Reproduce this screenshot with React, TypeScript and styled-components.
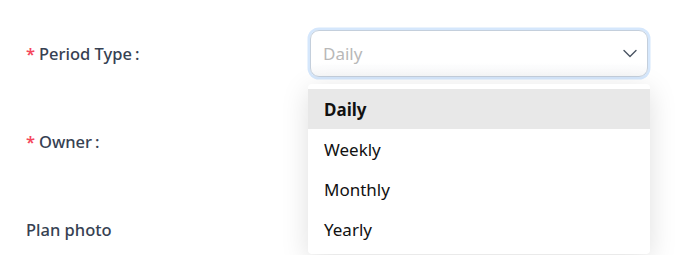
import React from 'react'
import styled, { createGlobalStyle } from 'styled-components'

const GlobalStyle = createGlobalStyle`
  body {
    margin: 0;
    background: #ffffff;
    font-family: "Noto Sans", "Open Sans", sans-serif;
  }
`

const Form = styled.div`
  padding: 28px 0 0 26px;
  display: flex;
  flex-direction: column;
  gap: 37px;
`

const Row = styled.div`
  display: grid;
  grid-template-columns: 282px 342px;
  align-items: center;
  min-height: 51px;
`

const Label = styled.div`
  display: flex;
  align-items: center;
  font-size: 16.5px;
  font-weight: 500;
  color: #364152;
`

const Required = styled.span`
  color: #f5475c;
  font-weight: 600;
  margin-right: 4px;
`

const Colon = styled.span`
  margin-left: 3px;
`

const Field = styled.div`
  position: relative;
  height: 51px;
`

const SelectBox = styled.div`
  box-sizing: border-box;
  margin: 2px 2px 2px 2px;
  height: 47px;
  border: 1px solid #c4cfdc;
  border-radius: 9px;
  box-shadow: 0 0 0 2.5px #d5e7fc;
  background: linear-gradient(#ffffff 70%, #f7f8f9);
  display: flex;
  align-items: center;
  justify-content: space-between;
  padding: 0 10px 0 12px;
`

const Placeholder = styled.span`
  font-size: 17px;
  color: #b8b8b8;
`

const Menu = styled.div`
  position: absolute;
  top: 56px;
  left: 0;
  right: 0;
  background: #ffffff;
  border-radius: 4px;
  padding: 5px 0;
  box-shadow: 0 6px 28px rgba(0, 0, 0, 0.13);
  z-index: 2;
`

const Option = styled.div<{ active?: boolean }>`
  height: 40px;
  display: flex;
  align-items: center;
  padding-left: 16px;
  font-size: 17px;
  color: #111111;
  font-weight: ${({ active }) => (active ? 700 : 400)};
  background: ${({ active }) => (active ? '#e8e8e8' : 'transparent')};
`

const Chevron = () => (
  <svg width="14" height="9" viewBox="0 0 14 9" fill="none">
    <polyline points="1,1.5 7,7.5 13,1.5" stroke="#4a5462" strokeWidth="1.4" strokeLinecap="round" strokeLinejoin="round" />
  </svg>
)

const options = ['Daily', 'Weekly', 'Monthly', 'Yearly']

export default function App() {
  return (
    <>
      <GlobalStyle />
      <Form>
        <Row>
          <Label>
            <Required>*</Required>Period Type<Colon>:</Colon>
          </Label>
          <Field>
            <SelectBox>
              <Placeholder>Daily</Placeholder>
              <Chevron />
            </SelectBox>
            <Menu>
              {options.map((o) => (
                <Option key={o} active={o === 'Daily'}>
                  {o}
                </Option>
              ))}
            </Menu>
          </Field>
        </Row>
        <Row>
          <Label>
            <Required>*</Required>Owner<Colon>:</Colon>
          </Label>
          <Field />
        </Row>
        <Row>
          <Label>Plan photo</Label>
          <Field />
        </Row>
      </Form>
    </>
  )
}
